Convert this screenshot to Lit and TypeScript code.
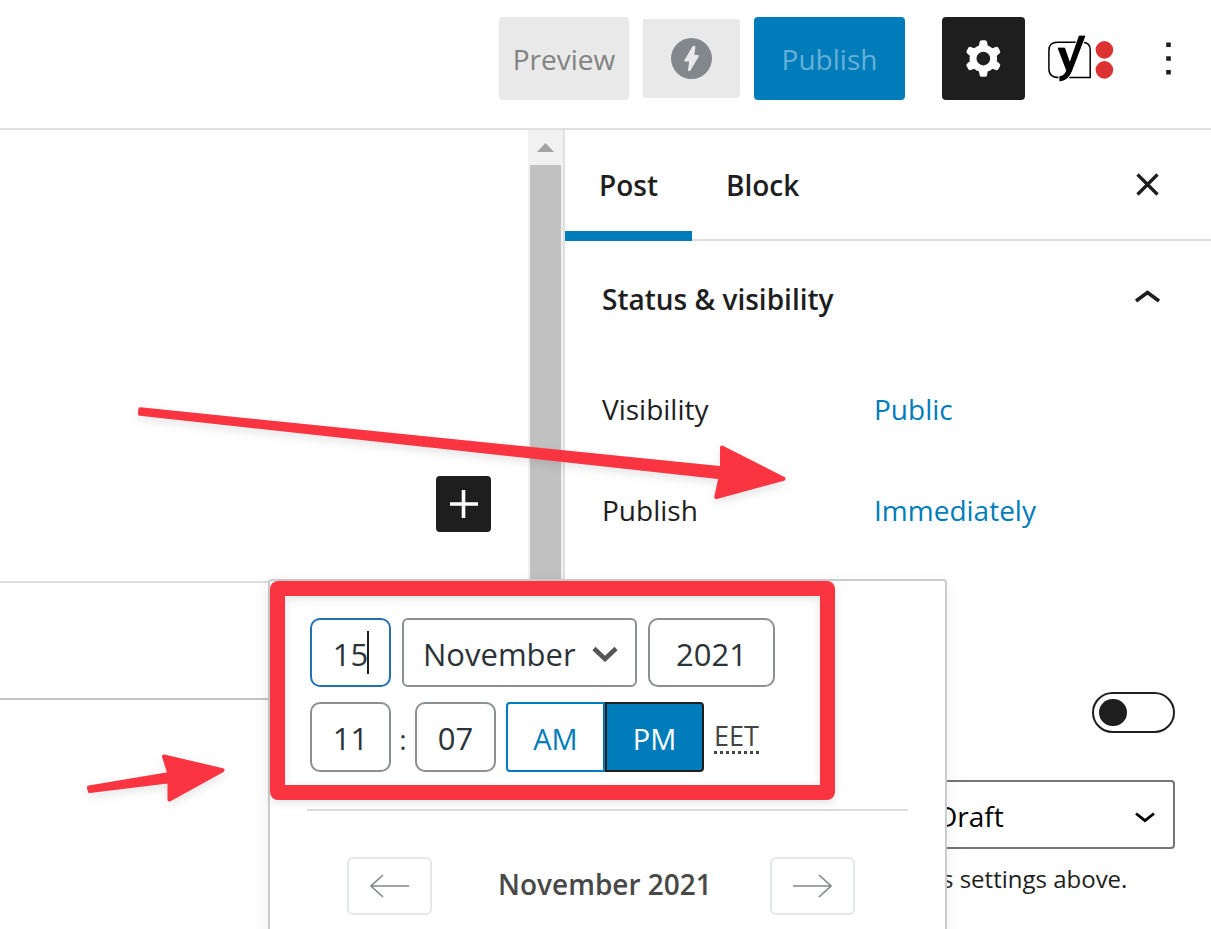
import { LitElement, html, css, svg } from "lit";
import { customElement } from "lit/decorators.js";

const ui = css`
  * {
    box-sizing: border-box;
  }
  button,
  input,
  select {
    font: inherit;
    color: inherit;
    margin: 0;
    padding: 0;
    border: 0;
    background: none;
    outline: none;
    appearance: none;
  }
  a {
    text-decoration: none;
  }
  svg {
    display: block;
    flex: none;
  }
`;

const arrow = svg`<path d="M39 12H1M13 1L1 12l12 11" fill="none" stroke="#82878c" stroke-width="1.6" />`;

@customElement("editor-header")
export class EditorHeader extends LitElement {
  static styles = [
    ui,
    css`
      :host {
        display: flex;
        align-items: center;
        justify-content: flex-end;
        gap: 14px;
        padding: 17px 15px 28px;
        border-bottom: 2px solid #e0e0e0;
      }
      .btn {
        display: flex;
        align-items: center;
        justify-content: center;
        height: 83px;
        border-radius: 4px;
      }
      .preview {
        width: 130px;
        background: #e9e9e9;
        color: #828282;
      }
      .amp {
        width: 97px;
        height: 79px;
        background: #e9e9e9;
        border-radius: 0 4px 4px 0;
      }
      .publish {
        width: 151px;
        background: #007cba;
        color: #66b0d6;
      }
      .settings {
        width: 83px;
        margin-left: 23px;
        background: #1e1e1e;
      }
      .yoast {
        margin-left: 9px;
      }
      .more {
        margin-left: 12px;
      }
    `,
  ];

  render() {
    return html`
      <button class="btn preview">Preview</button>
      <button class="btn amp" aria-label="Preview AMP">
        <svg width="41" height="41" viewBox="0 0 41 41">
          <circle cx="20.5" cy="20.5" r="20.5" fill="#82878c" />
          <path
            d="M22.3 8h1.4q.8 0 .7.8L23.4 17h3.8q1.2.2.6 1.4L19.4 32.6q-.3.5-.9.5h-1q-.6 0-.5-.8l1.1-8.8h-3.9q-1.4-.1-.7-1.4L21.4 8.6q.3-.6.9-.6z"
            fill="#e9e9e9"
          />
        </svg>
      </button>
      <button class="btn publish">Publish</button>
      <button class="btn settings" aria-label="Settings">
        <svg width="55" height="55" viewBox="0 0 24 24" fill="#fff">
          <path
            fill-rule="evenodd"
            d="M10.289 4.836A1 1 0 0111.275 4h1.306a1 1 0 01.987.836l.244 1.466c.787.26 1.503.679 2.108 1.218l1.393-.522a1 1 0 011.216.437l.653 1.13a1 1 0 01-.23 1.273l-1.148.944a6.025 6.025 0 010 2.435l1.149.946a1 1 0 01.23 1.272l-.653 1.13a1 1 0 01-1.216.437l-1.394-.522c-.605.54-1.32.958-2.108 1.218l-.244 1.466a1 1 0 01-.987.836h-1.306a1 1 0 01-.986-.836l-.244-1.466a5.995 5.995 0 01-2.108-1.218l-1.394.522a1 1 0 01-1.217-.436l-.653-1.131a1 1 0 01.23-1.272l1.149-.946a6.026 6.026 0 010-2.435l-1.148-.944a1 1 0 01-.23-1.272l.653-1.131a1 1 0 011.217-.437l1.393.522a5.994 5.994 0 012.108-1.218l.244-1.466zM14.929 12a3 3 0 11-6 0 3 3 0 016 0z"
          />
        </svg>
      </button>
      <button class="yoast" aria-label="Yoast SEO">
        <svg width="67" height="47" viewBox="0 0 67 47">
          <path
            d="M42.2 42.6H11Q.9 42.6.9 34V15.5Q.9 7.2 9.5 7.2H34Q42.2 7.2 42.2 14.5z"
            fill="#fff"
            stroke="#000"
            stroke-width="1.5"
          />
          <path
            d="M10 12.9H16.6L21.8 28 31.2.9H37L23.8 35.5Q20.2 45.4 11.8 46V41.6Q16.8 40.8 18.6 35.4z"
            fill="#000"
            stroke="#fff"
            stroke-width="2.6"
            paint-order="stroke"
          />
          <path d="M10 12.9H16.6L21.8 28 31.2.9H37L23.8 35.5Q20.2 45.4 11.8 46V41.6Q16.8 40.8 18.6 35.4z" stroke="#000" stroke-width=".6" />
          <circle cx="56.4" cy="14.9" r="8.8" fill="#dc3232" />
          <circle cx="56.4" cy="34.9" r="8.8" fill="#dc3232" />
        </svg>
      </button>
      <button class="more" aria-label="Options">
        <svg width="55" height="55" viewBox="0 0 24 24" fill="#1e1e1e">
          <path d="M13 19h-2v-2h2v2zm0-6h-2v-2h2v2zm0-6h-2V5h2v2z" />
        </svg>
      </button>
    `;
  }
}

@customElement("editor-canvas")
export class EditorCanvas extends LitElement {
  static styles = [
    ui,
    css`
      :host {
        display: flex;
        flex: 1;
        min-width: 0;
      }
      .page {
        flex: 1;
      }
      .content {
        display: flex;
        align-items: flex-end;
        justify-content: flex-end;
        height: 453px;
        padding: 0 37px 49px 0;
        border-bottom: 2px solid #ddd;
      }
      .add {
        display: flex;
        align-items: center;
        justify-content: center;
        width: 55px;
        height: 56px;
        border-radius: 4px;
        background: #1e1e1e;
      }
      .metabox {
        height: 117px;
        border-bottom: 2px solid #c3c4c7;
      }
      .scroll {
        display: flex;
        flex-direction: column;
        align-items: center;
        width: 35px;
        padding: 0 2px;
        background: #f1f1f1;
      }
      .up {
        display: flex;
        align-items: center;
        justify-content: center;
        height: 35px;
      }
      .thumb {
        flex: 1;
        width: 100%;
        background: #c1c1c1;
      }
    `,
  ];

  render() {
    return html`
      <div class="page">
        <div class="content">
          <button class="add" aria-label="Add block">
            <svg width="28" height="28" viewBox="0 0 28 28" stroke="#fff" stroke-width="3.6">
              <path d="M13.500 0v28M0 14h28" />
            </svg>
          </button>
        </div>
        <div class="metabox"></div>
      </div>
      <div class="scroll">
        <div class="up">
          <svg width="17" height="9" viewBox="0 0 17 9"><path d="M0 9L8.500 0 17 9z" fill="#a3a3a3" /></svg>
        </div>
        <div class="thumb"></div>
      </div>
    `;
  }
}

@customElement("date-popover")
export class DatePopover extends LitElement {
  static styles = [
    ui,
    css`
      :host {
        display: block;
        box-sizing: border-box;
        background: #fff;
        border: 2px solid #ccc;
        border-radius: 4px;
        box-shadow: 0 6px 20px rgba(0, 0, 0, 0.06);
        padding: 37px 37px 0;
        color: #2c3338;
        font-size: 31px;
      }
      .highlight {
        position: absolute;
        top: 0;
        left: 0;
        width: 565px;
        height: 219px;
        border: 15px solid #fa3441;
        border-radius: 8px;
        filter: drop-shadow(0 3px 4px rgba(0, 0, 0, 0.1));
        pointer-events: none;
      }
      .fields {
        display: flex;
        flex-direction: column;
        gap: 15px;
        padding: 0 3px 37px;
        border-bottom: 2px solid #ddd;
      }
      .row {
        display: flex;
        align-items: center;
        gap: 11px;
      }
      .row.time {
        gap: 10px;
      }
      .box {
        width: 81px;
        height: 69px;
        padding-top: 2px;
        border: 2px solid #8c8f94;
        border-radius: 10px;
        text-align: center;
      }
      .time .box,
      .time button {
        height: 70px;
      }
      .day {
        position: relative;
      }
      .day .box {
        display: block;
        border-color: #2271b1;
      }
      .caret {
        position: absolute;
        left: 57px;
        top: 13px;
        width: 2px;
        height: 43px;
        background: #1e1e1e;
      }
      .month {
        position: relative;
      }
      .month .box {
        display: block;
        width: 235px;
        padding-left: 19px;
        border-radius: 6px;
        text-align: left;
      }
      .month svg {
        position: absolute;
        right: 19px;
        top: 28px;
      }
      .year {
        width: 127px;
      }
      .clock {
        display: flex;
        align-items: center;
      }
      .colon {
        width: 24px;
        padding-top: 4px;
        text-align: center;
        font-size: 28px;
      }
      .ampm {
        display: flex;
        font-size: 29px;
      }
      .ampm button {
        width: 99px;
        padding-top: 2px;
        border: 2px solid #007cba;
        border-radius: 4px 0 0 4px;
        color: #007cba;
      }
      .ampm .on {
        border-color: #1e1e1e;
        border-radius: 0 4px 4px 0;
        background: #007cba;
        color: #fff;
      }
      .zone {
        font-size: 27px;
        line-height: 30px;
        color: #444;
        text-decoration: none;
        border-bottom: 3px dotted #444;
      }
      .nav {
        display: flex;
        align-items: center;
        justify-content: space-between;
        padding: 46px 53px 0 40px;
      }
      .nav button {
        display: flex;
        align-items: center;
        justify-content: center;
        width: 85px;
        height: 58px;
        border: 2px solid #e4e7e7;
        border-radius: 6px;
      }
      .title {
        padding: 0 0 4px 8px;
        font-size: 28px;
        font-weight: 600;
        color: #484848;
      }
    `,
  ];

  render() {
    return html`
      <div class="fields">
        <div class="row">
          <div class="day">
            <input class="box" aria-label="Day" inputmode="numeric" value="15" />
            <span class="caret"></span>
          </div>
          <div class="month">
            <select class="box" aria-label="Month">
              <option>November</option>
            </select>
            <svg width="26" height="16" viewBox="0 0 26 16">
              <path d="M2 2.500l11 10.500L24 2.500" fill="none" stroke="#555" stroke-width="4.500" />
            </svg>
          </div>
          <input class="box year" aria-label="Year" inputmode="numeric" value="2021" />
        </div>
        <div class="row time">
          <div class="clock">
            <input class="box" aria-label="Hours" inputmode="numeric" value="11" />
            <span class="colon">:</span>
            <input class="box" aria-label="Minutes" inputmode="numeric" value="07" />
          </div>
          <div class="ampm">
            <button>AM</button>
            <button class="on">PM</button>
          </div>
          <abbr class="zone">EET</abbr>
        </div>
      </div>
      <div class="nav">
        <button aria-label="Previous month">
          <svg width="40" height="24" viewBox="0 0 40 24">${arrow}</svg>
        </button>
        <span class="title">November 2021</span>
        <button aria-label="Next month">
          <svg width="40" height="24" viewBox="0 0 40 24"><g transform="rotate(180 20 12)">${arrow}</g></svg>
        </button>
      </div>
      <div class="highlight"></div>
    `;
  }
}

@customElement("editor-sidebar")
export class EditorSidebar extends LitElement {
  static styles = [
    ui,
    css`
      :host {
        display: block;
        box-sizing: border-box;
        position: relative;
        width: 648px;
        border-left: 2px solid #e0e0e0;
        color: #1e1e1e;
      }
      .tabs {
        display: flex;
        align-items: stretch;
        height: 111px;
        padding-right: 36px;
        box-shadow: inset 0 -2px #ddd;
        font-weight: 600;
      }
      .tab {
        padding: 0 34px 2px;
      }
      .tab.active {
        box-shadow: inset 0 -10px #007cba;
      }
      .close {
        margin-left: auto;
        padding-bottom: 2px;
      }
      .body {
        padding: 0 36px 0 37px;
      }
      .head {
        display: flex;
        align-items: center;
        justify-content: space-between;
        width: 100%;
        height: 118px;
        padding-bottom: 2px;
        font-weight: 600;
      }
      .line {
        display: flex;
        align-items: center;
        height: 101px;
        padding-bottom: 2px;
      }
      .label {
        width: 272px;
      }
      a {
        color: #007cba;
      }
      .pending {
        display: flex;
        justify-content: flex-end;
        padding: 131px 0 47px;
      }
      .switch {
        width: 83px;
        height: 41px;
        padding: 5px;
        border: 2px solid #1e1e1e;
        border-radius: 21px;
      }
      .switch::before {
        content: "";
        display: block;
        width: 28px;
        height: 27px;
        border-radius: 14px;
        background: #1e1e1e;
      }
      .status {
        position: relative;
        margin-left: 302px;
      }
      .status select {
        display: block;
        width: 100%;
        height: 69px;
        padding: 2px 0 0 31px;
        border: 2px solid #757575;
        border-radius: 4px;
        color: #000;
      }
      .status svg {
        position: absolute;
        right: 20px;
        top: 32px;
      }
      .help {
        margin: 13px 0 0 340px;
        font-size: 24px;
        line-height: 34px;
        white-space: nowrap;
      }
      date-popover {
        position: absolute;
        z-index: 1;
        top: 449px;
        right: 264px;
        width: 679px;
        height: 400px;
      }
    `,
  ];

  render() {
    return html`
      <div class="tabs">
        <button class="tab active">Post</button>
        <button class="tab">Block</button>
        <button class="close" aria-label="Close settings">
          <svg width="55" height="55" viewBox="0 0 55 55">
            <path d="M17.500 17.500l20 20M37.500 17.500l-20 20" stroke="#1e1e1e" stroke-width="3.300" />
          </svg>
        </button>
      </div>
      <div class="body">
        <button class="head">
          Status &amp; visibility
          <svg width="55" height="55" viewBox="0 0 55 55">
            <path d="M16 29L27.500 20.500 39 29" fill="none" stroke="#1e1e1e" stroke-width="3.500" />
          </svg>
        </button>
        <div class="line">
          <span class="label">Visibility</span>
          <a href="#visibility">Public</a>
        </div>
        <div class="line">
          <span class="label">Publish</span>
          <a href="#schedule">Immediately</a>
        </div>
        <div class="pending">
          <input class="switch" type="checkbox" role="switch" aria-label="Pending review" />
        </div>
        <div class="status">
          <select aria-label="Status">
            <option>Draft</option>
          </select>
          <svg width="20" height="12" viewBox="0 0 20 12">
            <path d="M1 1.500l9 7.200 9-7.200" fill="none" stroke="#000" stroke-width="2.800" />
          </svg>
        </div>
        <p class="help">s settings above.</p>
      </div>
      <date-popover></date-popover>
    `;
  }
}

@customElement("app-root")
export class AppRoot extends LitElement {
  static styles = [
    ui,
    css`
      :host {
        display: flex;
        flex-direction: column;
        position: relative;
        height: 100vh;
        overflow: hidden;
        background: #fff;
        font-family: "Open Sans", "Noto Sans", sans-serif;
        font-size: 28px;
      }
      main {
        display: flex;
        flex: 1;
        min-height: 0;
      }
      .marks {
        position: absolute;
        z-index: 2;
        top: 0;
        right: 0;
        width: 1211px;
        height: 929px;
        pointer-events: none;
        filter: drop-shadow(0 4px 5px rgba(0, 0, 0, 0.1));
      }
    `,
  ];

  render() {
    return html`
      <editor-header></editor-header>
      <main>
        <editor-canvas></editor-canvas>
        <editor-sidebar></editor-sidebar>
      </main>
      <svg class="marks" viewBox="0 0 1211 929" fill="#fa3441" stroke="#fa3441" stroke-width="4" stroke-linejoin="round">
        <path d="M140.300 409.300L722 468.300 722 447.500 783.500 478.700 716.300 497 720.500 477.300 139.900 413.800z" />
        <path d="M89 787.500L169.500 774 164 756.500 222.500 770.300 169.500 799.500 169.500 781.300 89.800 791z" />
      </svg>
    `;
  }
}
